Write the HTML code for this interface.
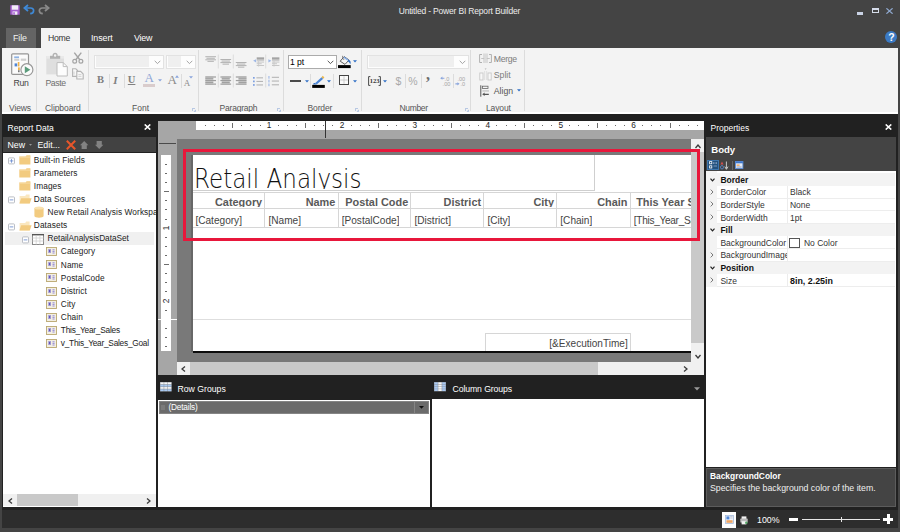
<!DOCTYPE html>
<html lang="en">
<head>
<meta charset="utf-8">
<title>Untitled - Power BI Report Builder</title>
<style>
html,body{margin:0;padding:0;}
body{width:900px;height:532px;overflow:hidden;background:#444444;font-family:"Liberation Sans",sans-serif;font-size:11px;color:#fff;position:relative;}
.a{position:absolute;}
.t{position:absolute;white-space:nowrap;line-height:14px;}
#titlebar{left:0;top:0;width:900px;height:48px;background:#444444;}
#ribbon{left:2px;top:48px;width:896px;height:65px;background:#f3f3f3;}
.sep{position:absolute;top:50px;width:1px;height:61px;background:#dcdcdc;}
.glabel{position:absolute;top:102px;color:#555;font-size:10.5px;line-height:12px;white-space:nowrap;}
.rt{position:absolute;color:#555;font-size:10.5px;line-height:12px;white-space:nowrap;}
.combo{position:absolute;height:14px;background:#e4e4e4;border:1px solid #fff;box-sizing:border-box;}
/* panels */
.phead{position:absolute;background:#2d2d2d;}
.white{position:absolute;background:#fff;}
.tree{margin-top:1.2px;position:absolute;color:#222;font-size:10.5px;line-height:13px;white-space:nowrap;}
.prop{margin-top:1.1px;position:absolute;color:#333;font-size:10.5px;line-height:13px;white-space:nowrap;}
.cell{position:absolute;color:#444;white-space:nowrap;overflow:hidden;}
.hd{position:absolute;left:0;right:0;top:3.2px;height:11.4px;overflow:hidden;font-weight:bold;font-size:10.9px;line-height:12px;color:#595959;}
.fd{position:absolute;left:3px;top:5.5px;height:11.3px;overflow:hidden;font-size:10.1px;line-height:12px;color:#444;}
</style>
</head>
<body>
<!-- ===== title bar ===== -->
<div id="titlebar" class="a"></div>
<div class="t" style="left:398.7px;top:4.2px;font-size:8.5px;letter-spacing:-0.18px;color:#ececec;">Untitled - Power BI Report Builder</div>


<!-- quick access icons -->
<svg class="a" style="left:9.5px;top:4.5px;" width="10" height="10" viewBox="0 0 10 10">
 <path d="M0.3 0.3 H9.7 V9.7 H0.3 Z" fill="#a55fd0"/>
 <rect x="1.8" y="0.3" width="6.4" height="4.4" fill="#f2ecf8"/>
 <rect x="2.6" y="6.4" width="4.8" height="3.3" fill="#f2ecf8"/>
 <rect x="3.3" y="7.2" width="1.5" height="2.5" fill="#a55fd0"/>
</svg>
<svg class="a" style="left:22.5px;top:4px;" width="13" height="11" viewBox="0 0 13 11">
 <path d="M5 1 L1.4 4 L5 7" fill="none" stroke="#3f8ad8" stroke-width="1.9"/>
 <path d="M2 4 H7.6 C11.6 4 11.8 9.2 7.2 9.6" fill="none" stroke="#3f8ad8" stroke-width="1.7"/>
</svg>
<svg class="a" style="left:36.5px;top:4px;" width="13" height="11" viewBox="0 0 13 11">
 <path d="M8 1 L11.6 4 L8 7" fill="none" stroke="#8a8a8a" stroke-width="1.9"/>
 <path d="M11 4 H5.4 C1.4 4 1.2 9.2 5.8 9.6" fill="none" stroke="#8a8a8a" stroke-width="1.7"/>
</svg>
<!-- window buttons -->
<div class="a" style="left:857px;top:12.3px;width:6px;height:2.4px;background:#c9d2e4;"></div>
<div class="a" style="left:872px;top:7.7px;width:7px;height:5.4px;border:1px solid #d5dcea;border-top-width:2px;box-sizing:border-box;"></div>
<svg class="a" style="left:886px;top:7.7px;" width="7" height="6" viewBox="0 0 7 6"><path d="M0.4 0.3 L6.6 5.7 M6.6 0.3 L0.4 5.7" stroke="#8fa9cf" stroke-width="1.2" fill="none"/></svg>
<!-- help -->
<div class="a" style="left:885.4px;top:31.3px;width:11.8px;height:11.8px;border-radius:50%;background:#3b7ac4;"></div>
<div class="t" style="left:888.3px;top:30.2px;font-size:10.5px;font-weight:bold;color:#fff;">?</div>

<!-- tabs -->
<div class="a" style="left:6px;top:28px;width:30px;height:20px;background:#646464;"></div>
<div class="t" style="left:13px;top:31px;font-size:8.9px;color:#f0f0f0;letter-spacing:-0.1px;">File</div>
<div class="a" style="left:41px;top:28px;width:39px;height:20px;background:#f3f3f3;"></div>
<div class="t" style="left:48px;top:31px;font-size:8.7px;color:#333;letter-spacing:-0.3px;">Home</div>
<div class="t" style="left:91px;top:31px;font-size:8.9px;color:#fff;letter-spacing:-0.1px;">Insert</div>
<div class="t" style="left:134px;top:31px;font-size:8.9px;color:#fff;letter-spacing:-0.2px;">View</div>

<!-- ===== ribbon ===== -->
<div id="ribbon" class="a"></div>


<!-- ribbon group separators -->
<div class="sep" style="left:36px;"></div>
<div class="sep" style="left:88px;"></div>
<div class="sep" style="left:198px;"></div>
<div class="sep" style="left:283px;"></div>
<div class="sep" style="left:361px;"></div>
<div class="sep" style="left:470px;"></div>
<div class="sep" style="left:524px;"></div>

<!-- Views group -->
<svg class="a" style="left:10px;top:52px;" width="24" height="26" viewBox="0 0 24 26">
  <rect x="1.7" y="1.8" width="16.8" height="20.6" rx="1" fill="#fbfbfb" stroke="#959595" stroke-width="1.2"/>
  <rect x="4.2" y="4.4" width="4.8" height="1.8" fill="#8db2e3"/><rect x="4.2" y="6.8" width="5" height="2" fill="#d0d0d0"/>
  <rect x="10.8" y="6.6" width="5.4" height="2.2" fill="#cfcfcf"/>
  <rect x="4.6" y="11.4" width="2.6" height="3" fill="#4f86d6"/><rect x="7.8" y="10" width="1.6" height="4.4" fill="#f1b34a"/>
  <rect x="8" y="15.4" width="1.8" height="2.6" fill="#f1b34a"/><rect x="8" y="18.2" width="1.6" height="2" fill="#777"/>
  <circle cx="16.9" cy="17.7" r="6" fill="#fbfbfb" stroke="#9a9a9a" stroke-width="1.2"/>
  <path d="M14.8 14.2 L20.4 17.7 L14.8 21.2 Z" fill="#5b9c7c"/>
</svg>
<div class="rt" style="left:13.5px;top:77px;font-size:8.7px;color:#444;letter-spacing:-0.3px;">Run</div>
<div class="glabel" style="left:9px;font-size:8.5px;letter-spacing:-0.1px;">Views</div>

<!-- Clipboard group -->
<svg class="a" style="left:45px;top:52px;" width="42" height="28" viewBox="0 0 42 28">
  <rect x="1.3" y="4" width="17.7" height="18.4" fill="#dfdfdf"/>
  <rect x="1.3" y="4" width="17.7" height="2.6" fill="#e9e9e9"/>
  <rect x="5" y="3.8" width="10.2" height="3" fill="#b2b2b2"/>
  <circle cx="10.1" cy="3.4" r="1.9" fill="#f3f3f3" stroke="#b2b2b2" stroke-width="1.3"/>
  <path d="M12 10.6 H18.2 L22.3 14.6 V24 H12 Z" fill="#fdfdfd" stroke="#bdbdbd" stroke-width="1"/>
  <path d="M18.2 10.6 V14.6 H22.3" fill="none" stroke="#bdbdbd" stroke-width="1"/>
  <g stroke="#a4a4a4" stroke-width="1.4" fill="none">
    <path d="M29.3 0.6 L35 8"/><path d="M36.3 0.6 L30.6 8"/>
    <circle cx="29.7" cy="9.3" r="1.9" stroke-width="1.2"/><circle cx="35.9" cy="9.3" r="1.9" stroke-width="1.2"/>
  </g>
  <g stroke="#b4b4b4" stroke-width="1.1" fill="#f7f7f7">
    <path d="M27.6 16.8 H30.8 L32.6 18.6 V24.4 H27.6 Z"/>
    <path d="M31.8 19.4 H35.6 L38.2 22 V27 H31.8 Z"/>
  </g>
  <path d="M33.4 22.6 H36.4 M33.4 24.4 H36.4 M29 19.6 V22.6" stroke="#c8c8c8" stroke-width="0.8" fill="none"/>
</svg>
<div class="rt" style="left:45.5px;top:77px;font-size:8.7px;color:#6e6e6e;letter-spacing:-0.42px;">Paste</div>
<div class="glabel" style="left:45px;font-size:8.5px;letter-spacing:-0.07px;">Clipboard</div>

<!-- Font group -->
<div class="a" style="left:93.5px;top:54.5px;width:70px;height:14px;background:#fdfdfd;border:1px solid #e2e2e2;box-sizing:border-box;"></div>
<div class="a" style="left:96px;top:56px;width:53px;height:11px;background:#efefef;"></div>
<svg class="a" style="left:153.5px;top:59.5px;" width="7" height="5" viewBox="0 0 7 5"><path d="M0.7 0.8 L3.5 3.6 L6.3 0.8" fill="none" stroke="#9a9a9a" stroke-width="0.9"/></svg>
<div class="a" style="left:165.5px;top:54.5px;width:30.5px;height:14px;background:#fdfdfd;border:1px solid #e2e2e2;box-sizing:border-box;"></div>
<div class="a" style="left:167.5px;top:56px;width:13.5px;height:11px;background:#efefef;"></div>
<svg class="a" style="left:185.5px;top:59.5px;" width="7" height="5" viewBox="0 0 7 5"><path d="M0.7 0.8 L3.5 3.6 L6.3 0.8" fill="none" stroke="#9a9a9a" stroke-width="0.9"/></svg>

<div class="rt" style="left:97px;top:74px;font-family:'Liberation Serif',serif;font-weight:bold;font-size:10.5px;color:#808080;">B</div>
<div class="a" style="left:108.5px;top:73.5px;width:1px;height:14px;background:#dcdcdc;"></div>
<div class="rt" style="left:113.2px;top:74px;font-family:'Liberation Serif',serif;font-style:italic;font-weight:bold;font-size:11px;color:#808080;">I</div>
<div class="a" style="left:123.5px;top:73.5px;width:1px;height:14px;background:#dcdcdc;"></div>
<div class="rt" style="left:127.8px;top:74px;font-family:'Liberation Serif',serif;font-weight:bold;font-size:10.5px;color:#808080;text-decoration:underline;">U</div>
<div class="rt" style="left:144.5px;top:71.5px;font-family:'Liberation Serif',serif;font-size:13px;color:#8fa6d6;">A</div>
<div class="a" style="left:142.5px;top:83.7px;width:12.3px;height:3px;background:#d9cccc;"></div>
<svg class="a" style="left:157.7px;top:79px;" width="4" height="3" viewBox="0 0 4 3"><path d="M0 0.3 H4 L2 2.6 Z" fill="#8aa5dc"/></svg>
<div class="rt" style="left:167.5px;top:73.5px;font-family:'Liberation Serif',serif;font-size:13px;color:#8c8c8c;">A</div>
<svg class="a" style="left:174.8px;top:74.7px;" width="4" height="3" viewBox="0 0 4 3"><path d="M0 2.7 H4 L2 0.3 Z" fill="#8aa5dc"/></svg>
<div class="a" style="left:180.5px;top:73.5px;width:1px;height:14px;background:#dcdcdc;"></div>
<div class="rt" style="left:183.7px;top:76.5px;font-family:'Liberation Serif',serif;font-size:9px;color:#8c8c8c;">A</div>
<svg class="a" style="left:189.2px;top:75.8px;" width="4" height="3" viewBox="0 0 4 3"><path d="M0 0.3 H4 L2 2.6 Z" fill="#8aa5dc"/></svg>
<div class="glabel" style="left:132px;font-size:8.5px;">Font</div>
<svg class="a launcher" style="left:192.3px;top:107.5px;" width="4" height="4" viewBox="0 0 4 4"><path d="M0.4 3 V0.4 H3" fill="none" stroke="#9fb6dc" stroke-width="0.8"/><path d="M1.6 3.8 H3.8 V1.6 Z" fill="#9fb6dc"/></svg>

<!-- Paragraph group -->
<svg class="a" style="left:204px;top:53px;" width="78" height="36" viewBox="0 0 78 36">
<rect x="1.30" y="3.20" width="10.70" height="1.0" fill="#b2b2b2"/>
<rect x="2.45" y="4.75" width="8.40" height="1.0" fill="#b2b2b2"/>
<rect x="1.30" y="6.30" width="10.70" height="1.0" fill="#b2b2b2"/>
<rect x="3.45" y="7.85" width="6.40" height="1.0" fill="#b2b2b2"/>
<rect x="16.40" y="6.00" width="10.70" height="1.0" fill="#b2b2b2"/>
<rect x="17.55" y="7.55" width="8.40" height="1.0" fill="#b2b2b2"/>
<rect x="16.40" y="9.10" width="10.70" height="1.0" fill="#b2b2b2"/>
<rect x="18.55" y="10.65" width="6.40" height="1.0" fill="#b2b2b2"/>
<rect x="31.80" y="9.00" width="10.70" height="1.0" fill="#b2b2b2"/>
<rect x="32.95" y="10.55" width="8.40" height="1.0" fill="#b2b2b2"/>
<rect x="31.80" y="12.10" width="10.70" height="1.0" fill="#b2b2b2"/>
<rect x="33.95" y="13.65" width="6.40" height="1.0" fill="#b2b2b2"/>
<rect x="13.80" y="1.5" width="1" height="14" fill="#dcdcdc"/>
<rect x="13.80" y="20.5" width="1" height="14" fill="#dcdcdc"/>
<rect x="28.80" y="1.5" width="1" height="14" fill="#dcdcdc"/>
<rect x="28.80" y="20.5" width="1" height="14" fill="#dcdcdc"/>
<rect x="61.20" y="1.5" width="1" height="14" fill="#dcdcdc"/>
<rect x="61.20" y="20.5" width="1" height="14" fill="#dcdcdc"/>
<rect x="52.70" y="4.40" width="7.40" height="1.5" fill="#9c9c9c"/>
<rect x="52.70" y="6.30" width="7.40" height="1.2" fill="#a8a8a8"/>
<rect x="52.70" y="8.60" width="7.40" height="0.9" fill="#c2c2c2"/>
<rect x="52.70" y="10.30" width="5.00" height="0.9" fill="#c2c2c2"/>
<rect x="52.70" y="12.00" width="7.40" height="0.9" fill="#c2c2c2"/>
<rect x="54.30" y="8.00" width="0.8" height="5.6" fill="#c8c8c8"/>
<path d="M52.10 6.20 L49.10 7.80 L52.10 9.40 Z" fill="#9db7e6"/>
<rect x="68.00" y="4.40" width="7.40" height="1.5" fill="#9c9c9c"/>
<rect x="68.00" y="6.30" width="7.40" height="1.2" fill="#a8a8a8"/>
<rect x="68.00" y="8.60" width="7.40" height="0.9" fill="#c2c2c2"/>
<rect x="68.00" y="10.30" width="5.00" height="0.9" fill="#c2c2c2"/>
<rect x="68.00" y="12.00" width="7.40" height="0.9" fill="#c2c2c2"/>
<rect x="69.60" y="8.00" width="0.8" height="5.6" fill="#c8c8c8"/>
<path d="M64.40 6.20 L67.40 7.80 L64.40 9.40 Z" fill="#9db7e6"/>
<rect x="1.30" y="23.40" width="8" height="8.3" fill="#d9d9d9"/>
<rect x="1.30" y="23.40" width="10.70" height="1.2" fill="#9e9e9e"/>
<rect x="1.30" y="25.18" width="8.00" height="1.2" fill="#9e9e9e"/>
<rect x="1.30" y="26.96" width="10.70" height="1.2" fill="#9e9e9e"/>
<rect x="1.30" y="28.74" width="8.00" height="1.2" fill="#9e9e9e"/>
<rect x="1.30" y="30.52" width="10.70" height="1.2" fill="#9e9e9e"/>
<rect x="17.75" y="23.40" width="8" height="8.3" fill="#d9d9d9"/>
<rect x="16.40" y="23.40" width="10.70" height="1.2" fill="#9e9e9e"/>
<rect x="17.75" y="25.18" width="8.00" height="1.2" fill="#9e9e9e"/>
<rect x="16.40" y="26.96" width="10.70" height="1.2" fill="#9e9e9e"/>
<rect x="17.75" y="28.74" width="8.00" height="1.2" fill="#9e9e9e"/>
<rect x="16.40" y="30.52" width="10.70" height="1.2" fill="#9e9e9e"/>
<rect x="34.50" y="23.40" width="8" height="8.3" fill="#d9d9d9"/>
<rect x="31.80" y="23.40" width="10.70" height="1.2" fill="#9e9e9e"/>
<rect x="34.50" y="25.18" width="8.00" height="1.2" fill="#9e9e9e"/>
<rect x="31.80" y="26.96" width="10.70" height="1.2" fill="#9e9e9e"/>
<rect x="34.50" y="28.74" width="8.00" height="1.2" fill="#9e9e9e"/>
<rect x="31.80" y="30.52" width="10.70" height="1.2" fill="#9e9e9e"/>
<rect x="49.00" y="24.00" width="1.7" height="1.7" fill="#7ea0e0"/>
<rect x="52.40" y="24.35" width="6.60" height="1.0" fill="#b0b0b0"/>
<rect x="49.00" y="27.55" width="1.7" height="1.7" fill="#7ea0e0"/>
<rect x="52.40" y="27.90" width="6.60" height="1.0" fill="#b0b0b0"/>
<rect x="49.00" y="31.10" width="1.7" height="1.7" fill="#7ea0e0"/>
<rect x="52.40" y="31.45" width="6.60" height="1.0" fill="#b0b0b0"/>
<rect x="64.40" y="23.00" width="1.1" height="2.7" fill="#9db7e6"/>
<rect x="67.80" y="23.80" width="7.20" height="1.0" fill="#b0b0b0"/>
<rect x="64.40" y="26.75" width="1.1" height="2.7" fill="#9db7e6"/>
<rect x="67.80" y="27.55" width="7.20" height="1.0" fill="#b0b0b0"/>
<rect x="64.40" y="30.50" width="1.1" height="2.7" fill="#9db7e6"/>
<rect x="67.80" y="31.30" width="7.20" height="1.0" fill="#b0b0b0"/>
</svg>
<div class="glabel" style="left:219.5px;font-size:8.5px;letter-spacing:-0.2px;">Paragraph</div>
<svg class="a" style="left:277.3px;top:107.5px;" width="4" height="4" viewBox="0 0 4 4"><path d="M0.4 3 V0.4 H3" fill="none" stroke="#9fb6dc" stroke-width="0.8"/><path d="M1.6 3.8 H3.8 V1.6 Z" fill="#9fb6dc"/></svg>
<!-- Border group -->
<div class="a" style="left:288px;top:54.5px;width:48.7px;height:14.2px;background:#fff;border:1px solid #ababab;box-sizing:border-box;"></div>
<div class="rt" style="left:290px;top:56.2px;font-size:8.6px;color:#000;letter-spacing:-0.1px;">1 pt</div>
<svg class="a" style="left:327px;top:59.5px;" width="7" height="5" viewBox="0 0 7 5"><path d="M0.7 0.8 L3.5 3.6 L6.3 0.8" fill="none" stroke="#444" stroke-width="0.9"/></svg>
<svg class="a" style="left:338px;top:55px;" width="14" height="14" viewBox="0 0 14 14">
 <path d="M2.2 6.2 L6.2 1.6 L11 5 L7 9.4 Z" fill="#f6f6f6" stroke="#4a4a4a" stroke-width="0.9"/>
 <path d="M4.6 0.8 C4.4 2.6 5 4 6.2 5" fill="none" stroke="#6a6a6a" stroke-width="0.8"/>
 <path d="M6.2 1.6 L11 5 L9.2 5.6 L5.4 2.8 Z" fill="#86aee8"/>
 <path d="M10.8 4.8 C12.6 5.4 13 7.2 12.4 9.2 C11.4 7.8 11 6.6 9.6 6.2 Z" fill="#2f6fc6"/>
 <rect x="0" y="10.1" width="12.7" height="3" fill="#000"/>
</svg>
<svg class="a" style="left:353.3px;top:60.2px;" width="4" height="3" viewBox="0 0 4 3"><path d="M0 0.3 H4 L2 2.6 Z" fill="#2f6fc6"/></svg>
<div class="a" style="left:289.7px;top:80.3px;width:11.4px;height:1.6px;background:#4a4a4a;"></div>
<svg class="a" style="left:304.5px;top:79.5px;" width="4" height="3" viewBox="0 0 4 3"><path d="M0 0.3 H4 L2 2.6 Z" fill="#2f6fc6"/></svg>
<div class="a" style="left:310px;top:74px;width:1px;height:14px;background:#dcdcdc;"></div>
<svg class="a" style="left:311.5px;top:74.5px;" width="14" height="14" viewBox="0 0 14 14">
 <path d="M3 8.2 L9.5 2.2 L11.2 3.8 L5 9.2 Z" fill="#4b86d8"/>
 <path d="M9.5 2.2 L10.8 0.8 L12.4 2.4 L11.2 3.8 Z" fill="#e9b54a"/>
 <path d="M0.8 9.2 C2 7.4 3 8 3 8.2 L5 9.2 C3.6 9.8 2 9.6 0.8 9.2 Z" fill="#2f6fc6"/>
 <rect x="0.2" y="9.9" width="12.6" height="3" fill="#000"/>
</svg>
<svg class="a" style="left:326.8px;top:79.5px;" width="4" height="3" viewBox="0 0 4 3"><path d="M0 0.3 H4 L2 2.6 Z" fill="#2f6fc6"/></svg>
<div class="a" style="left:332.5px;top:74px;width:1px;height:14px;background:#dcdcdc;"></div>
<svg class="a" style="left:339px;top:75.4px;" width="11" height="11" viewBox="0 0 11 11">
 <rect x="0.5" y="0.5" width="9" height="9" fill="#fafafa" stroke="#444" stroke-width="1"/>
 <path d="M5 1.2 V8.8 M1.2 5 H8.8" stroke="#c8c8c8" stroke-width="0.9" fill="none"/>
</svg>
<svg class="a" style="left:353.3px;top:79.5px;" width="4" height="3" viewBox="0 0 4 3"><path d="M0 0.3 H4 L2 2.6 Z" fill="#2f6fc6"/></svg>
<div class="glabel" style="left:307.5px;font-size:8.5px;letter-spacing:-0.12px;">Border</div>
<svg class="a" style="left:355.3px;top:107.5px;" width="4" height="4" viewBox="0 0 4 4"><path d="M0.4 3 V0.4 H3" fill="none" stroke="#9fb6dc" stroke-width="0.8"/><path d="M1.6 3.8 H3.8 V1.6 Z" fill="#9fb6dc"/></svg>
<!-- Number group -->
<div class="a" style="left:367px;top:54.5px;width:101.7px;height:14px;background:#fdfdfd;border:1px solid #e2e2e2;box-sizing:border-box;"></div>
<div class="a" style="left:369px;top:56px;width:85px;height:11px;background:#efefef;"></div>
<svg class="a" style="left:458.5px;top:59.5px;" width="7" height="5" viewBox="0 0 7 5"><path d="M0.7 0.8 L3.5 3.6 L6.3 0.8" fill="none" stroke="#9a9a9a" stroke-width="0.9"/></svg>
<svg class="a" style="left:368px;top:75.5px;" width="13" height="10" viewBox="0 0 13 10">
 <path d="M2.4 0.6 H0.6 V9.4 H2.4 M10.6 0.6 H12.4 V9.4 H10.6" fill="none" stroke="#4a4a4a" stroke-width="1"/>
 <text x="6.5" y="7.3" font-family="Liberation Serif,serif" font-weight="bold" font-size="6.5" fill="#333" text-anchor="middle">123</text>
</svg>
<svg class="a" style="left:383.2px;top:79.7px;" width="4" height="3" viewBox="0 0 4 3"><path d="M0 0.3 H4 L2 2.6 Z" fill="#2f6fc6"/></svg>
<div class="rt" style="left:395.5px;top:74.5px;font-size:10.5px;color:#a9a9a9;">$</div>
<div class="a" style="left:405px;top:73.5px;width:1px;height:14px;background:#dcdcdc;"></div>
<div class="rt" style="left:408.3px;top:74.5px;font-size:10.5px;color:#a9a9a9;">%</div>
<div class="a" style="left:420.5px;top:73.5px;width:1px;height:14px;background:#dcdcdc;"></div>
<div class="rt" style="left:426px;top:68.6px;font-family:'Liberation Serif',serif;font-weight:bold;font-size:16px;color:#6c6c6c;">,</div>
<svg class="a" style="left:439.5px;top:75.5px;" width="13" height="11" viewBox="0 0 13 11">
 <path d="M0.2 2.2 L2.4 0.6 V1.7 H4.4 V2.8 H2.4 V3.8 Z" fill="#8aa5dc"/>
 <text x="4.6" y="4.8" font-family="Liberation Sans,sans-serif" font-size="5.6" fill="#a6a6a6">.0</text>
 <text x="2.6" y="10.2" font-family="Liberation Sans,sans-serif" font-size="5.6" fill="#a6a6a6">.00</text>
</svg>
<div class="a" style="left:453px;top:73.5px;width:1px;height:14px;background:#dcdcdc;"></div>
<svg class="a" style="left:455px;top:75.5px;" width="13" height="11" viewBox="0 0 13 11">
 <text x="2.4" y="4.8" font-family="Liberation Sans,sans-serif" font-size="5.6" fill="#a6a6a6">.00</text>
 <path d="M4.6 7.8 L2.4 6.2 V7.3 H0.4 V8.4 H2.4 V9.4 Z" fill="#8aa5dc"/>
 <text x="5.4" y="10.2" font-family="Liberation Sans,sans-serif" font-size="5.6" fill="#a6a6a6">.0</text>
</svg>
<div class="glabel" style="left:399.5px;font-size:8.5px;letter-spacing:-0.33px;">Number</div>
<svg class="a" style="left:465.3px;top:107.5px;" width="4" height="4" viewBox="0 0 4 4"><path d="M0.4 3 V0.4 H3" fill="none" stroke="#9fb6dc" stroke-width="0.8"/><path d="M1.6 3.8 H3.8 V1.6 Z" fill="#9fb6dc"/></svg>
<!-- Layout group -->
<svg class="a" style="left:478.5px;top:53px;" width="13" height="11" viewBox="0 0 13 11">
 <rect x="4" y="0.5" width="5" height="9.5" fill="#dcdcdc"/>
 <path d="M3 1.5 H0.6 V9.5 H3 M10 1.5 H12.4 V9.5 H10" fill="none" stroke="#b0b0b0" stroke-width="1"/>
 <path d="M2.2 5.5 H5.2 M7.8 5.5 H10.8" stroke="#c4c4c4" stroke-width="1"/>
</svg>
<div class="rt" style="left:493.8px;top:52.7px;font-size:8.7px;color:#7c7c7c;letter-spacing:-0.34px;">Merge</div>
<svg class="a" style="left:478.5px;top:67.5px;" width="13" height="13" viewBox="0 0 13 13">
 <path d="M5.6 0.6 H7.6 L6.6 1.8 Z" fill="#b0b0b0"/>
 <rect x="0.8" y="5" width="3.2" height="7" fill="#f8f8f8" stroke="#c9c9c9" stroke-width="0.9"/>
 <rect x="9" y="5" width="3.2" height="7" fill="#f8f8f8" stroke="#c9c9c9" stroke-width="0.9"/>
 <path d="M5.6 3 V12 M7.6 3 V12" stroke="#dadada" stroke-width="0.8"/>
</svg>
<div class="rt" style="left:493.8px;top:69px;font-size:8.7px;color:#7c7c7c;">Split</div>
<svg class="a" style="left:480px;top:84.5px;" width="10" height="12" viewBox="0 0 10 12">
 <path d="M0.8 0.3 V11.7" stroke="#555" stroke-width="1"/>
 <rect x="2.4" y="1.2" width="5.6" height="2.2" fill="none" stroke="#666" stroke-width="0.8"/>
 <rect x="2.4" y="5" width="6.6" height="1.8" fill="#d0d0d0"/>
 <path d="M2.2 9.3 L4.6 7.6 V8.8 H8.8 V9.9 H4.6 V11 Z" fill="#555"/>
</svg>
<div class="rt" style="left:493.8px;top:85px;font-size:8.7px;color:#555;">Align</div>
<svg class="a" style="left:516.6px;top:89px;" width="4" height="3" viewBox="0 0 4 3"><path d="M0 0.3 H4 L2 2.6 Z" fill="#2f6fc6"/></svg>
<div class="glabel" style="left:486px;font-size:8.5px;letter-spacing:-0.12px;">Layout</div>
<!-- ===== dark band ===== -->
<div class="a" style="left:2px;top:112px;width:896px;height:1.5px;background:#fff;"></div>
<div class="a" style="left:2px;top:113.5px;width:896px;height:396.5px;background:#212121;"></div>

<!-- ===== left panel ===== -->


<div class="t" style="left:7.5px;top:120.5px;font-size:8.6px;color:#fff;">Report Data</div>
<svg class="a" style="left:144.3px;top:124px;" width="7" height="6" viewBox="0 0 7 6"><path d="M0.7 0.4 L6.3 5.6 M6.3 0.4 L0.7 5.6" stroke="#fff" stroke-width="1.5" fill="none"/></svg>
<div class="a" style="left:3px;top:137px;width:153px;height:15px;background:#424242;"></div>
<div class="t" style="left:7.5px;top:138.3px;font-size:8.8px;color:#fff;">New</div>
<svg class="a" style="left:29.3px;top:144.3px;" width="3" height="2" viewBox="0 0 3 2"><path d="M0 0 H3 L1.5 1.8 Z" fill="#9a9a9a"/></svg>
<div class="t" style="left:37.5px;top:138.3px;font-size:8.8px;color:#fff;">Edit...</div>
<svg class="a" style="left:65.5px;top:140px;" width="10" height="10" viewBox="0 0 10 10"><path d="M0.8 0.8 L9.2 9.2 M9.2 0.8 L0.8 9.2" stroke="#e8562a" stroke-width="2" fill="none"/></svg>
<svg class="a" style="left:80.3px;top:141px;" width="9" height="8" viewBox="0 0 9 8"><path d="M4.2 0 L8.4 4.2 H6.8 V8 H1.6 V4.2 H0 Z" fill="#828282"/></svg>
<svg class="a" style="left:94.6px;top:141.2px;" width="9" height="8" viewBox="0 0 9 8"><path d="M4.2 8 L8.4 3.8 H6.8 V0 H1.6 V3.8 H0 Z" fill="#828282"/></svg>
<div class="a" style="left:3px;top:152.5px;width:152.7px;height:354px;background:#fff;overflow:hidden;" id="tree">
<div class="a" style="left:2.3px;top:79.8px;width:148.5px;height:12.8px;background:#f0f0f0;"></div>
<svg class="a" style="left:5.0px;top:4.5px;" width="7" height="8" viewBox="0 0 7 8"><rect x="0.5" y="0.9" width="6" height="6" rx="0.8" fill="#fff" stroke="#b4b8c0" stroke-width="0.9"/><path d="M1.7 3.9 H5.3" stroke="#6f8fd0" stroke-width="0.9"/><path d="M3.5 2.1 V5.7" stroke="#6f8fd0" stroke-width="0.9"/></svg>
<svg class="a" style="left:15.7px;top:2.5px;" width="12" height="10" viewBox="0 0 12 10"><path d="M0.3 1.6 H6.6 L7.6 0.3 H11.4 V9.6 H0.3 Z" fill="#f2cb80"/><path d="M0.3 1.6 H11.4 V2.6 H0.3 Z" fill="#f7dca6"/></svg>
<div class="tree" style="left:30.8px;top:0.0px;font-size:8.3px;letter-spacing:0.09px;">Built-in Fields</div>
<svg class="a" style="left:15.7px;top:15.6px;" width="12" height="10" viewBox="0 0 12 10"><path d="M0.3 1.6 H6.6 L7.6 0.3 H11.4 V9.6 H0.3 Z" fill="#f2cb80"/><path d="M0.3 1.6 H11.4 V2.6 H0.3 Z" fill="#f7dca6"/></svg>
<div class="tree" style="left:30.8px;top:13.1px;font-size:8.3px;letter-spacing:0.09px;">Parameters</div>
<svg class="a" style="left:15.7px;top:28.7px;" width="12" height="10" viewBox="0 0 12 10"><path d="M0.3 1.6 H6.6 L7.6 0.3 H11.4 V9.6 H0.3 Z" fill="#f2cb80"/><path d="M0.3 1.6 H11.4 V2.6 H0.3 Z" fill="#f7dca6"/></svg>
<div class="tree" style="left:30.8px;top:26.2px;font-size:8.3px;letter-spacing:0.09px;">Images</div>
<svg class="a" style="left:5.0px;top:43.9px;" width="7" height="8" viewBox="0 0 7 8"><rect x="0.5" y="0.9" width="6" height="6" rx="0.8" fill="#fff" stroke="#b4b8c0" stroke-width="0.9"/><path d="M1.7 3.9 H5.3" stroke="#6f8fd0" stroke-width="0.9"/></svg>
<svg class="a" style="left:15.7px;top:41.9px;" width="13" height="10" viewBox="0 0 13 10"><path d="M0.6 2 H6.2 L7.2 0.5 H10.6 V9.4 H0.6 Z" fill="#fae7bf"/><path d="M2.2 4.2 H12.6 L10.8 9.6 H0.4 Z" fill="#f2cb80"/></svg>
<div class="tree" style="left:30.8px;top:39.4px;font-size:8.3px;letter-spacing:0.09px;">Data Sources</div>
<svg class="a" style="left:30.8px;top:53.8px;" width="10" height="12" viewBox="0 0 10 12"><path d="M0.4 2 V10 C0.4 12.2 9.6 12.2 9.6 10 V2 Z" fill="#f2cb80"/><ellipse cx="5" cy="2" rx="4.6" ry="1.6" fill="#f9e2b0"/></svg>
<div class="tree" style="left:44.6px;top:52.5px;font-size:8.3px;letter-spacing:0.09px;">New Retail Analysis Workspace</div>
<svg class="a" style="left:5.0px;top:70.1px;" width="7" height="8" viewBox="0 0 7 8"><rect x="0.5" y="0.9" width="6" height="6" rx="0.8" fill="#fff" stroke="#b4b8c0" stroke-width="0.9"/><path d="M1.7 3.9 H5.3" stroke="#6f8fd0" stroke-width="0.9"/></svg>
<svg class="a" style="left:15.7px;top:68.1px;" width="13" height="10" viewBox="0 0 13 10"><path d="M0.6 2 H6.2 L7.2 0.5 H10.6 V9.4 H0.6 Z" fill="#fae7bf"/><path d="M2.2 4.2 H12.6 L10.8 9.6 H0.4 Z" fill="#f2cb80"/></svg>
<div class="tree" style="left:30.8px;top:65.6px;font-size:8.3px;letter-spacing:0.09px;">Datasets</div>
<svg class="a" style="left:18.7px;top:83.2px;" width="7" height="8" viewBox="0 0 7 8"><rect x="0.5" y="0.9" width="6" height="6" rx="0.8" fill="#fff" stroke="#b4b8c0" stroke-width="0.9"/><path d="M1.7 3.9 H5.3" stroke="#6f8fd0" stroke-width="0.9"/></svg>
<svg class="a" style="left:29.4px;top:81.1px;" width="12" height="11" viewBox="0 0 12 11"><rect x="0.5" y="0.5" width="11" height="10" fill="#fff" stroke="#8a8a8a" stroke-width="1"/><rect x="0" y="0" width="12" height="1.4" fill="#555"/><path d="M4.2 1.6 V10.5 M7.9 1.6 V10.5 M0.5 4 H11.5 M0.5 7 H11.5" stroke="#d0d0d0" stroke-width="0.8"/></svg>
<div class="tree" style="left:44.6px;top:78.7px;font-size:8.3px;letter-spacing:-0.04px;">RetailAnalysisDataSet</div>
<svg class="a" style="left:43.2px;top:94.7px;" width="11" height="9" viewBox="0 0 11 9"><rect x="0.5" y="0.5" width="10" height="8" fill="#f3efe2" stroke="#b9a66f" stroke-width="0.9"/><path d="M2.2 3 H5 M2.2 5 H5 M3.6 3 V5" stroke="#5a4fc0" stroke-width="1" fill="none"/><path d="M6.5 2.8 H8.6 M6.5 4.4 H8.6 M6.5 6 H8.6" stroke="#7d74d4" stroke-width="0.8"/></svg>
<div class="tree" style="left:57.8px;top:91.8px;font-size:8.3px;letter-spacing:0.09px;">Category</div>
<svg class="a" style="left:43.2px;top:107.8px;" width="11" height="9" viewBox="0 0 11 9"><rect x="0.5" y="0.5" width="10" height="8" fill="#f3efe2" stroke="#b9a66f" stroke-width="0.9"/><path d="M2.2 3 H5 M2.2 5 H5 M3.6 3 V5" stroke="#5a4fc0" stroke-width="1" fill="none"/><path d="M6.5 2.8 H8.6 M6.5 4.4 H8.6 M6.5 6 H8.6" stroke="#7d74d4" stroke-width="0.8"/></svg>
<div class="tree" style="left:57.8px;top:105.0px;font-size:8.3px;letter-spacing:0.09px;">Name</div>
<svg class="a" style="left:43.2px;top:120.9px;" width="11" height="9" viewBox="0 0 11 9"><rect x="0.5" y="0.5" width="10" height="8" fill="#f3efe2" stroke="#b9a66f" stroke-width="0.9"/><path d="M2.2 3 H5 M2.2 5 H5 M3.6 3 V5" stroke="#5a4fc0" stroke-width="1" fill="none"/><path d="M6.5 2.8 H8.6 M6.5 4.4 H8.6 M6.5 6 H8.6" stroke="#7d74d4" stroke-width="0.8"/></svg>
<div class="tree" style="left:57.8px;top:118.1px;font-size:8.3px;letter-spacing:0.09px;">PostalCode</div>
<svg class="a" style="left:43.2px;top:134.1px;" width="11" height="9" viewBox="0 0 11 9"><rect x="0.5" y="0.5" width="10" height="8" fill="#f3efe2" stroke="#b9a66f" stroke-width="0.9"/><path d="M2.2 3 H5 M2.2 5 H5 M3.6 3 V5" stroke="#5a4fc0" stroke-width="1" fill="none"/><path d="M6.5 2.8 H8.6 M6.5 4.4 H8.6 M6.5 6 H8.6" stroke="#7d74d4" stroke-width="0.8"/></svg>
<div class="tree" style="left:57.8px;top:131.2px;font-size:8.3px;letter-spacing:0.09px;">District</div>
<svg class="a" style="left:43.2px;top:147.2px;" width="11" height="9" viewBox="0 0 11 9"><rect x="0.5" y="0.5" width="10" height="8" fill="#f3efe2" stroke="#b9a66f" stroke-width="0.9"/><path d="M2.2 3 H5 M2.2 5 H5 M3.6 3 V5" stroke="#5a4fc0" stroke-width="1" fill="none"/><path d="M6.5 2.8 H8.6 M6.5 4.4 H8.6 M6.5 6 H8.6" stroke="#7d74d4" stroke-width="0.8"/></svg>
<div class="tree" style="left:57.8px;top:144.3px;font-size:8.3px;letter-spacing:0.09px;">City</div>
<svg class="a" style="left:43.2px;top:160.3px;" width="11" height="9" viewBox="0 0 11 9"><rect x="0.5" y="0.5" width="10" height="8" fill="#f3efe2" stroke="#b9a66f" stroke-width="0.9"/><path d="M2.2 3 H5 M2.2 5 H5 M3.6 3 V5" stroke="#5a4fc0" stroke-width="1" fill="none"/><path d="M6.5 2.8 H8.6 M6.5 4.4 H8.6 M6.5 6 H8.6" stroke="#7d74d4" stroke-width="0.8"/></svg>
<div class="tree" style="left:57.8px;top:157.4px;font-size:8.3px;letter-spacing:0.09px;">Chain</div>
<svg class="a" style="left:43.2px;top:173.4px;" width="11" height="9" viewBox="0 0 11 9"><rect x="0.5" y="0.5" width="10" height="8" fill="#f3efe2" stroke="#b9a66f" stroke-width="0.9"/><path d="M2.2 3 H5 M2.2 5 H5 M3.6 3 V5" stroke="#5a4fc0" stroke-width="1" fill="none"/><path d="M6.5 2.8 H8.6 M6.5 4.4 H8.6 M6.5 6 H8.6" stroke="#7d74d4" stroke-width="0.8"/></svg>
<div class="tree" style="left:57.8px;top:170.6px;font-size:8.3px;letter-spacing:-0.22px;">This_Year_Sales</div>
<svg class="a" style="left:43.2px;top:186.5px;" width="11" height="9" viewBox="0 0 11 9"><rect x="0.5" y="0.5" width="10" height="8" fill="#f3efe2" stroke="#b9a66f" stroke-width="0.9"/><path d="M2.2 3 H5 M2.2 5 H5 M3.6 3 V5" stroke="#5a4fc0" stroke-width="1" fill="none"/><path d="M6.5 2.8 H8.6 M6.5 4.4 H8.6 M6.5 6 H8.6" stroke="#7d74d4" stroke-width="0.8"/></svg>
<div class="tree" style="left:57.8px;top:183.7px;font-size:8.3px;letter-spacing:-0.24px;">v_This_Year_Sales_Goal</div>
<div class="a" style="left:0;top:341.7px;width:152.7px;height:12.3px;background:#f0f0f0;"></div>
<div class="a" style="left:13.7px;top:341.7px;width:61px;height:12.3px;background:#c9c9c9;"></div>
<svg class="a" style="left:4.8px;top:345px;" width="5" height="6" viewBox="0 0 5 6"><path d="M4 0.5 L1 3 L4 5.5" fill="none" stroke="#3a3a3a" stroke-width="1.3"/></svg>
<svg class="a" style="left:143.3px;top:345px;" width="5" height="6" viewBox="0 0 5 6"><path d="M1 0.5 L4 3 L1 5.5" fill="none" stroke="#3a3a3a" stroke-width="1.3"/></svg>
</div>
<!-- ===== design surface ===== -->
<div id="design" class="a" style="left:158px;top:121px;width:546px;height:254px;background:#a6a6a6;overflow:hidden;">
<div class="a" style="left:38px;top:0px;width:508px;height:9px;background:#fff;"></div>
<div class="a" style="left:46.8px;top:3.7px;width:1px;height:1.4px;background:#6a6a6a;"></div>
<div class="a" style="left:55.9px;top:3.7px;width:1px;height:1.4px;background:#6a6a6a;"></div>
<div class="a" style="left:65.0px;top:3.7px;width:1px;height:1.4px;background:#6a6a6a;"></div>
<div class="a" style="left:74.1px;top:1.8px;width:1px;height:5px;background:#6e6e6e;"></div>
<div class="a" style="left:83.3px;top:3.7px;width:1px;height:1.4px;background:#6a6a6a;"></div>
<div class="a" style="left:92.4px;top:3.7px;width:1px;height:1.4px;background:#6a6a6a;"></div>
<div class="a" style="left:101.5px;top:3.7px;width:1px;height:1.4px;background:#6a6a6a;"></div>
<div class="t" style="left:108.1px;top:-2.6px;width:6px;text-align:center;font-size:8.3px;color:#222;line-height:14px;">1</div>
<div class="a" style="left:119.7px;top:3.7px;width:1px;height:1.4px;background:#6a6a6a;"></div>
<div class="a" style="left:128.8px;top:3.7px;width:1px;height:1.4px;background:#6a6a6a;"></div>
<div class="a" style="left:137.9px;top:3.7px;width:1px;height:1.4px;background:#6a6a6a;"></div>
<div class="a" style="left:147.1px;top:1.8px;width:1px;height:5px;background:#6e6e6e;"></div>
<div class="a" style="left:156.2px;top:3.7px;width:1px;height:1.4px;background:#6a6a6a;"></div>
<div class="a" style="left:165.3px;top:3.7px;width:1px;height:1.4px;background:#6a6a6a;"></div>
<div class="a" style="left:174.4px;top:3.7px;width:1px;height:1.4px;background:#6a6a6a;"></div>
<div class="t" style="left:181.0px;top:-2.6px;width:6px;text-align:center;font-size:8.3px;color:#222;line-height:14px;">2</div>
<div class="a" style="left:192.6px;top:3.7px;width:1px;height:1.4px;background:#6a6a6a;"></div>
<div class="a" style="left:201.7px;top:3.7px;width:1px;height:1.4px;background:#6a6a6a;"></div>
<div class="a" style="left:210.8px;top:3.7px;width:1px;height:1.4px;background:#6a6a6a;"></div>
<div class="a" style="left:219.9px;top:1.8px;width:1px;height:5px;background:#6e6e6e;"></div>
<div class="a" style="left:229.1px;top:3.7px;width:1px;height:1.4px;background:#6a6a6a;"></div>
<div class="a" style="left:238.2px;top:3.7px;width:1px;height:1.4px;background:#6a6a6a;"></div>
<div class="a" style="left:247.3px;top:3.7px;width:1px;height:1.4px;background:#6a6a6a;"></div>
<div class="t" style="left:253.9px;top:-2.6px;width:6px;text-align:center;font-size:8.3px;color:#222;line-height:14px;">3</div>
<div class="a" style="left:265.5px;top:3.7px;width:1px;height:1.4px;background:#6a6a6a;"></div>
<div class="a" style="left:274.6px;top:3.7px;width:1px;height:1.4px;background:#6a6a6a;"></div>
<div class="a" style="left:283.7px;top:3.7px;width:1px;height:1.4px;background:#6a6a6a;"></div>
<div class="a" style="left:292.9px;top:1.8px;width:1px;height:5px;background:#6e6e6e;"></div>
<div class="a" style="left:302.0px;top:3.7px;width:1px;height:1.4px;background:#6a6a6a;"></div>
<div class="a" style="left:311.1px;top:3.7px;width:1px;height:1.4px;background:#6a6a6a;"></div>
<div class="a" style="left:320.2px;top:3.7px;width:1px;height:1.4px;background:#6a6a6a;"></div>
<div class="t" style="left:326.8px;top:-2.6px;width:6px;text-align:center;font-size:8.3px;color:#222;line-height:14px;">4</div>
<div class="a" style="left:338.4px;top:3.7px;width:1px;height:1.4px;background:#6a6a6a;"></div>
<div class="a" style="left:347.5px;top:3.7px;width:1px;height:1.4px;background:#6a6a6a;"></div>
<div class="a" style="left:356.6px;top:3.7px;width:1px;height:1.4px;background:#6a6a6a;"></div>
<div class="a" style="left:365.8px;top:1.8px;width:1px;height:5px;background:#6e6e6e;"></div>
<div class="a" style="left:374.9px;top:3.7px;width:1px;height:1.4px;background:#6a6a6a;"></div>
<div class="a" style="left:384.0px;top:3.7px;width:1px;height:1.4px;background:#6a6a6a;"></div>
<div class="a" style="left:393.1px;top:3.7px;width:1px;height:1.4px;background:#6a6a6a;"></div>
<div class="t" style="left:399.7px;top:-2.6px;width:6px;text-align:center;font-size:8.3px;color:#222;line-height:14px;">5</div>
<div class="a" style="left:411.3px;top:3.7px;width:1px;height:1.4px;background:#6a6a6a;"></div>
<div class="a" style="left:420.4px;top:3.7px;width:1px;height:1.4px;background:#6a6a6a;"></div>
<div class="a" style="left:429.5px;top:3.7px;width:1px;height:1.4px;background:#6a6a6a;"></div>
<div class="a" style="left:438.7px;top:1.8px;width:1px;height:5px;background:#6e6e6e;"></div>
<div class="a" style="left:447.8px;top:3.7px;width:1px;height:1.4px;background:#6a6a6a;"></div>
<div class="a" style="left:456.9px;top:3.7px;width:1px;height:1.4px;background:#6a6a6a;"></div>
<div class="a" style="left:466.0px;top:3.7px;width:1px;height:1.4px;background:#6a6a6a;"></div>
<div class="t" style="left:472.6px;top:-2.6px;width:6px;text-align:center;font-size:8.3px;color:#222;line-height:14px;">6</div>
<div class="a" style="left:484.2px;top:3.7px;width:1px;height:1.4px;background:#6a6a6a;"></div>
<div class="a" style="left:493.3px;top:3.7px;width:1px;height:1.4px;background:#6a6a6a;"></div>
<div class="a" style="left:502.4px;top:3.7px;width:1px;height:1.4px;background:#6a6a6a;"></div>
<div class="a" style="left:511.5px;top:1.8px;width:1px;height:5px;background:#6e6e6e;"></div>
<div class="a" style="left:520.7px;top:3.7px;width:1px;height:1.4px;background:#6a6a6a;"></div>
<div class="a" style="left:529.8px;top:3.7px;width:1px;height:1.4px;background:#6a6a6a;"></div>
<div class="a" style="left:538.9px;top:3.7px;width:1px;height:1.4px;background:#6a6a6a;"></div>
<div class="a" style="left:167px;top:0;width:1px;height:17px;background:#333;"></div>
<div class="a" style="left:18.7px;top:17.7px;width:527.3px;height:236.3px;background:#797979;"></div>
<div class="a" style="left:1.2px;top:22px;width:16.6px;height:1px;background:#4a4a4a;"></div>
<div class="a" style="left:2.7px;top:33.7px;width:10.8px;height:196.3px;background:#fff;"></div>
<div class="a" style="left:7.4px;top:42.8px;width:1.4px;height:1px;background:#6a6a6a;"></div>
<div class="a" style="left:7.4px;top:51.9px;width:1.4px;height:1px;background:#6a6a6a;"></div>
<div class="a" style="left:7.4px;top:61.0px;width:1.4px;height:1px;background:#6a6a6a;"></div>
<div class="a" style="left:5.6px;top:70.1px;width:5px;height:1px;background:#6e6e6e;"></div>
<div class="a" style="left:7.4px;top:79.3px;width:1.4px;height:1px;background:#6a6a6a;"></div>
<div class="a" style="left:7.4px;top:88.4px;width:1.4px;height:1px;background:#6a6a6a;"></div>
<div class="a" style="left:7.4px;top:97.5px;width:1.4px;height:1px;background:#6a6a6a;"></div>
<div class="t" style="left:2.7px;top:100.1px;width:10.8px;height:14px;text-align:center;font-size:8.3px;color:#222;line-height:14px;transform:rotate(-90deg);">1</div>
<div class="a" style="left:7.4px;top:115.7px;width:1.4px;height:1px;background:#6a6a6a;"></div>
<div class="a" style="left:7.4px;top:124.8px;width:1.4px;height:1px;background:#6a6a6a;"></div>
<div class="a" style="left:7.4px;top:133.9px;width:1.4px;height:1px;background:#6a6a6a;"></div>
<div class="a" style="left:5.6px;top:143.1px;width:5px;height:1px;background:#6e6e6e;"></div>
<div class="a" style="left:7.4px;top:152.2px;width:1.4px;height:1px;background:#6a6a6a;"></div>
<div class="a" style="left:7.4px;top:161.3px;width:1.4px;height:1px;background:#6a6a6a;"></div>
<div class="a" style="left:7.4px;top:170.4px;width:1.4px;height:1px;background:#6a6a6a;"></div>
<div class="t" style="left:2.7px;top:173.0px;width:10.8px;height:14px;text-align:center;font-size:8.3px;color:#222;line-height:14px;transform:rotate(-90deg);">2</div>
<div class="a" style="left:7.4px;top:188.6px;width:1.4px;height:1px;background:#6a6a6a;"></div>
<div class="a" style="left:0px;top:197.5px;width:18.5px;height:1.3px;background:#fff;"></div>
<div class="a" style="left:7.4px;top:206.8px;width:1.4px;height:1px;background:#6a6a6a;"></div>
<div class="a" style="left:7.4px;top:215.9px;width:1.4px;height:1px;background:#6a6a6a;"></div>
<div class="a" style="left:7.4px;top:225.0px;width:1.4px;height:1px;background:#6a6a6a;"></div>
<div id="page" class="a" style="left:34.4px;top:33.7px;width:498.6px;height:196.3px;background:#fff;overflow:hidden;">
<div class="a" style="left:0;top:0;width:402.3px;height:36.3px;border-right:1px solid #cfcfcf;border-bottom:1px solid #cfcfcf;box-sizing:border-box;overflow:hidden;"><div id="rtitle" class="a" style="left:1.2px;top:9.4px;font-family:'DejaVu Sans Light','DejaVu Sans','Liberation Sans',sans-serif;font-weight:200;font-size:26px;line-height:30px;transform:scaleX(0.887);transform-origin:0 0;color:#111;white-space:nowrap;height:24.6px;overflow:hidden;">Retail Analysis</div></div>
<div class="cell" style="left:0.0px;top:37.2px;width:73.1px;height:17.2px;border-right:1px solid #d6d6d6;border-bottom:1px solid #d6d6d6;border-top:1px solid #d6d6d6;box-sizing:border-box;"><div class="hd" style="text-align:right;padding-right:2.3px;">Category</div></div>
<div class="cell" style="left:0.0px;top:54.4px;width:73.1px;height:19.3px;border-right:1px solid #d6d6d6;border-bottom:1px solid #d6d6d6;box-sizing:border-box;"><div class="fd">[Category]</div></div>
<div class="cell" style="left:73.1px;top:37.2px;width:73.2px;height:17.2px;border-right:1px solid #d6d6d6;border-bottom:1px solid #d6d6d6;border-top:1px solid #d6d6d6;box-sizing:border-box;"><div class="hd" style="text-align:right;padding-right:2.3px;">Name</div></div>
<div class="cell" style="left:73.1px;top:54.4px;width:73.2px;height:19.3px;border-right:1px solid #d6d6d6;border-bottom:1px solid #d6d6d6;box-sizing:border-box;"><div class="fd">[Name]</div></div>
<div class="cell" style="left:146.3px;top:37.2px;width:72.8px;height:17.2px;border-right:1px solid #d6d6d6;border-bottom:1px solid #d6d6d6;border-top:1px solid #d6d6d6;box-sizing:border-box;"><div class="hd" style="text-align:right;padding-right:2.3px;">Postal Code</div></div>
<div class="cell" style="left:146.3px;top:54.4px;width:72.8px;height:19.3px;border-right:1px solid #d6d6d6;border-bottom:1px solid #d6d6d6;box-sizing:border-box;"><div class="fd">[PostalCode]</div></div>
<div class="cell" style="left:219.1px;top:37.2px;width:72.9px;height:17.2px;border-right:1px solid #d6d6d6;border-bottom:1px solid #d6d6d6;border-top:1px solid #d6d6d6;box-sizing:border-box;"><div class="hd" style="text-align:right;padding-right:2.3px;">District</div></div>
<div class="cell" style="left:219.1px;top:54.4px;width:72.9px;height:19.3px;border-right:1px solid #d6d6d6;border-bottom:1px solid #d6d6d6;box-sizing:border-box;"><div class="fd">[District]</div></div>
<div class="cell" style="left:292.0px;top:37.2px;width:72.9px;height:17.2px;border-right:1px solid #d6d6d6;border-bottom:1px solid #d6d6d6;border-top:1px solid #d6d6d6;box-sizing:border-box;"><div class="hd" style="text-align:right;padding-right:2.3px;">City</div></div>
<div class="cell" style="left:292.0px;top:54.4px;width:72.9px;height:19.3px;border-right:1px solid #d6d6d6;border-bottom:1px solid #d6d6d6;box-sizing:border-box;"><div class="fd">[City]</div></div>
<div class="cell" style="left:364.9px;top:37.2px;width:73.5px;height:17.2px;border-right:1px solid #d6d6d6;border-bottom:1px solid #d6d6d6;border-top:1px solid #d6d6d6;box-sizing:border-box;"><div class="hd" style="text-align:right;padding-right:2.3px;">Chain</div></div>
<div class="cell" style="left:364.9px;top:54.4px;width:73.5px;height:19.3px;border-right:1px solid #d6d6d6;border-bottom:1px solid #d6d6d6;box-sizing:border-box;"><div class="fd">[Chain]</div></div>
<div class="cell" style="left:438.4px;top:37.2px;width:72.9px;height:17.2px;border-right:1px solid #d6d6d6;border-bottom:1px solid #d6d6d6;border-top:1px solid #d6d6d6;box-sizing:border-box;"><div class="hd" style="text-align:left;padding-left:5.4px;">This Year Sales</div></div>
<div class="cell" style="left:438.4px;top:54.4px;width:72.9px;height:19.3px;border-right:1px solid #d6d6d6;border-bottom:1px solid #d6d6d6;box-sizing:border-box;"><div class="fd" style="letter-spacing:-0.3px;">[This_Year_Sales]</div></div>
<div class="a" style="left:0;top:164.0px;width:498.6px;height:1px;background:#dedede;"></div>
<div class="a" style="left:292.3px;top:178.6px;width:146.6px;height:30px;border:1px solid #d6d6d6;box-sizing:border-box;"><div class="a" style="right:2.6px;top:3.8px;font-size:10.05px;line-height:12px;color:#444;white-space:nowrap;">[&amp;ExecutionTime]</div></div>
</div>
<div class="a" style="left:32.6px;top:33.7px;width:2px;height:197.6px;background:#676767;"></div>
<div class="a" style="left:35px;top:229.7px;width:498px;height:2.1px;background:#0c0c0c;"></div>
<div class="a" style="left:533px;top:17.7px;width:13px;height:236.3px;background:#f0f0f0;"></div>
<div class="a" style="left:533px;top:31px;width:13px;height:190.5px;background:#c9c9c9;"></div>
<svg class="a" style="left:536.5px;top:22.5px;" width="6" height="5" viewBox="0 0 6 5"><path d="M0.5 4 L3 1 L5.5 4" fill="none" stroke="#3a3a3a" stroke-width="1.3"/></svg>
<svg class="a" style="left:536.5px;top:232.5px;" width="6" height="5" viewBox="0 0 6 5"><path d="M0.5 1 L3 4 L5.5 1" fill="none" stroke="#3a3a3a" stroke-width="1.3"/></svg>
<div class="a" style="left:18.7px;top:241px;width:514.3px;height:13px;background:#f0f0f0;"></div>
<div class="a" style="left:31.5px;top:241px;width:408.0px;height:13px;background:#c9c9c9;"></div>
<svg class="a" style="left:22.8px;top:244.5px;" width="5" height="6" viewBox="0 0 5 6"><path d="M4 0.5 L1 3 L4 5.5" fill="none" stroke="#3a3a3a" stroke-width="1.3"/></svg>
<svg class="a" style="left:524.5px;top:244.5px;" width="5" height="6" viewBox="0 0 5 6"><path d="M1 0.5 L4 3 L1 5.5" fill="none" stroke="#3a3a3a" stroke-width="1.3"/></svg>
<div class="a" style="left:25px;top:28.3px;width:517px;height:91.7px;border:3px solid #e8173b;box-sizing:border-box;"></div>
</div>

<!-- ===== groups ===== -->


<svg class="a" style="left:159.7px;top:381.8px;" width="12" height="10" viewBox="0 0 12 10"><rect x="0" y="0" width="11.7" height="9.5" fill="#8a8f96"/><rect x="0.40" y="0.40" width="3.3" height="1.85" fill="#f8f8f8"/><rect x="4.20" y="0.40" width="3.3" height="1.85" fill="#f8f8f8"/><rect x="8.00" y="0.40" width="3.3" height="1.85" fill="#f8f8f8"/><rect x="0.40" y="2.70" width="3.3" height="1.85" fill="#a9c9f2"/><rect x="4.20" y="2.70" width="3.3" height="1.85" fill="#a9c9f2"/><rect x="8.00" y="2.70" width="3.3" height="1.85" fill="#a9c9f2"/><rect x="0.40" y="5.00" width="3.3" height="1.85" fill="#eeeeee"/><rect x="4.20" y="5.00" width="3.3" height="1.85" fill="#eeeeee"/><rect x="8.00" y="5.00" width="3.3" height="1.85" fill="#eeeeee"/><rect x="0.40" y="7.30" width="3.3" height="1.85" fill="#a9c9f2"/><rect x="4.20" y="7.30" width="3.3" height="1.85" fill="#a9c9f2"/><rect x="8.00" y="7.30" width="3.3" height="1.85" fill="#a9c9f2"/></svg>
<div class="t" style="left:177.5px;top:381.6px;font-size:8.7px;color:#fff;">Row Groups</div>
<div class="a" style="left:158px;top:399.5px;width:272px;height:107.2px;background:#fff;"></div>
<div class="a" style="left:159px;top:400.8px;width:270.3px;height:13.6px;background:#6b6b6b;border:1px solid #858585;box-sizing:border-box;"></div>
<div class="a" style="left:161px;top:405.2px;width:4px;height:4.4px;background:#7b7b7b;"></div>
<div class="t" style="left:168.5px;top:400.2px;font-size:8.3px;color:#fff;letter-spacing:-0.2px;">(Details)</div>
<div class="a" style="left:414.3px;top:401.8px;width:1px;height:11.6px;background:#858585;"></div>
<svg class="a" style="left:419.2px;top:406.3px;" width="5" height="3" viewBox="0 0 5 3"><path d="M0 0 H5 L2.5 2.8 Z" fill="#111"/></svg>
<svg class="a" style="left:434.2px;top:381.8px;" width="13" height="10" viewBox="0 0 13 10"><rect x="0" y="0" width="12" height="9.4" fill="#8a8f96"/><rect x="0.40" y="0.40" width="3.4" height="1.85" fill="#a9c9f2"/><rect x="0.40" y="2.65" width="3.4" height="1.85" fill="#a9c9f2"/><rect x="0.40" y="4.90" width="3.4" height="1.85" fill="#a9c9f2"/><rect x="0.40" y="7.15" width="3.4" height="1.85" fill="#a9c9f2"/><rect x="4.30" y="0.40" width="3.4" height="1.85" fill="#f8f8f8"/><rect x="4.30" y="2.65" width="3.4" height="1.85" fill="#f8f8f8"/><rect x="4.30" y="4.90" width="3.4" height="1.85" fill="#f8f8f8"/><rect x="4.30" y="7.15" width="3.4" height="1.85" fill="#f8f8f8"/><rect x="8.20" y="0.40" width="3.4" height="1.85" fill="#a9c9f2"/><rect x="8.20" y="2.65" width="3.4" height="1.85" fill="#a9c9f2"/><rect x="8.20" y="4.90" width="3.4" height="1.85" fill="#a9c9f2"/><rect x="8.20" y="7.15" width="3.4" height="1.85" fill="#a9c9f2"/></svg>
<div class="t" style="left:452.5px;top:381.6px;font-size:8.7px;color:#fff;letter-spacing:-0.1px;">Column Groups</div>
<svg class="a" style="left:694px;top:387.4px;" width="6" height="4" viewBox="0 0 6 4"><path d="M0 0.2 H6 L3 3.6 Z" fill="#9a9a9a"/></svg>
<div class="a" style="left:432.3px;top:399px;width:271.7px;height:107.7px;background:#fff;"></div>
<!-- ===== properties ===== -->
<div class="t" style="left:710.5px;top:120.5px;font-size:8.5px;color:#fff;">Properties</div>
<svg class="a" style="left:884.8px;top:124px;" width="7" height="6" viewBox="0 0 7 6"><path d="M0.7 0.4 L6.3 5.6 M6.3 0.4 L0.7 5.6" stroke="#fff" stroke-width="1.5" fill="none"/></svg>
<div class="a" style="left:706.2px;top:137px;width:190.3px;height:34px;background:#444;"></div>
<div class="t" style="left:711.3px;top:142.8px;font-size:9.6px;font-weight:bold;color:#fff;letter-spacing:-0.1px;">Body</div>
<div class="a" style="left:707.3px;top:160.2px;width:11.6px;height:10px;background:#23527f;border:1px solid #3e76ae;box-sizing:border-box;"></div>
<svg class="a" style="left:708.8px;top:161.4px;" width="9" height="8" viewBox="0 0 9 8"><rect x="0.6" y="0.6" width="2.2" height="2.2" fill="none" stroke="#fff" stroke-width="0.8"/><rect x="0.6" y="4.8" width="2.2" height="2.2" fill="none" stroke="#fff" stroke-width="0.8"/><path d="M4.5 1.2 V3 M6 1.2 V3 M7.5 1.2 V3 M4.5 5 H8" stroke="#9db4d2" stroke-width="0.7"/></svg>
<svg class="a" style="left:720.4px;top:161px;" width="9" height="9" viewBox="0 0 9 9"><path d="M2 0.4 L3.6 3.4 H0.4 Z" fill="#d05050"/><path d="M2 4.6 A1.5 1.7 0 1 0 2.01 4.6" fill="none" stroke="#5b8fd8" stroke-width="0.9"/><path d="M6.4 0.5 V7.5 M4.8 5.6 L6.4 8.3 L8 5.6" fill="none" stroke="#d8d8d8" stroke-width="0.9"/></svg>
<div class="a" style="left:731.6px;top:160.8px;width:1px;height:9px;background:#666;"></div>
<svg class="a" style="left:735px;top:161.2px;" width="9" height="8" viewBox="0 0 9 8"><rect x="0.5" y="0.5" width="7.4" height="7" fill="#e4ebf6" stroke="#5d8fd8" stroke-width="0.9"/><rect x="0.5" y="0.5" width="7.4" height="1.8" fill="#3f78cc"/><rect x="1.6" y="3.4" width="3" height="1.6" fill="#f0b070"/><path d="M1.6 6 H6.6" stroke="#7f8fb0" stroke-width="0.8"/></svg>
<div id="pgrid" class="a" style="left:706.2px;top:171px;width:190.3px;height:296px;background:#fff;overflow:hidden;">
<div class="a" style="left:0;top:0;width:11px;height:115.9px;background:#f3f3f3;"></div>
<div class="a" style="left:0;top:2.3px;width:188.8px;height:12.6px;background:#f3f3f3;"></div>
<svg class="a" style="left:3.8px;top:6.9px;" width="5" height="4" viewBox="0 0 5 4"><path d="M0.5 0.6 L2.5 2.8 L4.5 0.6" fill="none" stroke="#222" stroke-width="1.2"/></svg>
<div class="prop" style="left:14.2px;top:1.7px;font-weight:bold;font-size:8.5px;color:#111;">Border</div>
<div class="a" style="left:11px;top:26.7px;width:177.8px;height:1px;background:#ededed;"></div>
<svg class="a" style="left:4.3px;top:17.5px;" width="4" height="6" viewBox="0 0 4 6"><path d="M0.7 0.6 L3 3 L0.7 5.4" fill="none" stroke="#777" stroke-width="1"/></svg>
<div class="prop" style="left:14.2px;top:14.3px;font-size:8.5px;color:#333;width:67.2px;overflow:hidden;">BorderColor</div>
<div class="prop" style="left:83.8px;top:14.3px;font-size:8.5px;color:#333;">Black</div>
<div class="a" style="left:11px;top:39.4px;width:177.8px;height:1px;background:#ededed;"></div>
<svg class="a" style="left:4.3px;top:30.1px;" width="4" height="6" viewBox="0 0 4 6"><path d="M0.7 0.6 L3 3 L0.7 5.4" fill="none" stroke="#777" stroke-width="1"/></svg>
<div class="prop" style="left:14.2px;top:26.9px;font-size:8.5px;color:#333;width:67.2px;overflow:hidden;">BorderStyle</div>
<div class="prop" style="left:83.8px;top:26.9px;font-size:8.5px;color:#333;">None</div>
<div class="a" style="left:11px;top:52.0px;width:177.8px;height:1px;background:#ededed;"></div>
<svg class="a" style="left:4.3px;top:42.8px;" width="4" height="6" viewBox="0 0 4 6"><path d="M0.7 0.6 L3 3 L0.7 5.4" fill="none" stroke="#777" stroke-width="1"/></svg>
<div class="prop" style="left:14.2px;top:39.6px;font-size:8.5px;color:#333;width:67.2px;overflow:hidden;">BorderWidth</div>
<div class="prop" style="left:83.8px;top:39.6px;font-size:8.5px;color:#333;">1pt</div>
<div class="a" style="left:0;top:52.8px;width:188.8px;height:12.6px;background:#f3f3f3;"></div>
<svg class="a" style="left:3.8px;top:57.4px;" width="5" height="4" viewBox="0 0 5 4"><path d="M0.5 0.6 L2.5 2.8 L4.5 0.6" fill="none" stroke="#222" stroke-width="1.2"/></svg>
<div class="prop" style="left:14.2px;top:52.2px;font-weight:bold;font-size:8.5px;color:#111;">Fill</div>
<div class="a" style="left:11px;top:77.2px;width:177.8px;height:1px;background:#ededed;"></div>
<div class="prop" style="left:14.2px;top:64.8px;font-size:8.5px;color:#333;width:67.2px;overflow:hidden;">BackgroundColor</div>
<div class="a" style="left:83px;top:66.7px;width:10.4px;height:10.4px;border:1px solid #555;background:#fff;box-sizing:border-box;"></div>
<div class="prop" style="left:97.8px;top:64.8px;font-size:8.5px;color:#333;">No Color</div>
<div class="a" style="left:11px;top:89.8px;width:177.8px;height:1px;background:#ededed;"></div>
<svg class="a" style="left:4.3px;top:80.6px;" width="4" height="6" viewBox="0 0 4 6"><path d="M0.7 0.6 L3 3 L0.7 5.4" fill="none" stroke="#777" stroke-width="1"/></svg>
<div class="prop" style="left:14.2px;top:77.4px;font-size:8.5px;color:#333;width:67.2px;overflow:hidden;">BackgroundImage</div>
<div class="a" style="left:0;top:90.6px;width:188.8px;height:12.6px;background:#f3f3f3;"></div>
<svg class="a" style="left:3.8px;top:95.2px;" width="5" height="4" viewBox="0 0 5 4"><path d="M0.5 0.6 L2.5 2.8 L4.5 0.6" fill="none" stroke="#222" stroke-width="1.2"/></svg>
<div class="prop" style="left:14.2px;top:90.0px;font-weight:bold;font-size:8.5px;color:#111;">Position</div>
<div class="a" style="left:11px;top:115.1px;width:177.8px;height:1px;background:#ededed;"></div>
<svg class="a" style="left:4.3px;top:105.9px;" width="4" height="6" viewBox="0 0 4 6"><path d="M0.7 0.6 L3 3 L0.7 5.4" fill="none" stroke="#777" stroke-width="1"/></svg>
<div class="prop" style="left:14.2px;top:102.7px;font-size:8.5px;color:#333;width:67.2px;overflow:hidden;">Size</div>
<div class="prop" style="left:83.8px;top:102.7px;font-size:8.9px;font-weight:bold;color:#111;">8in, 2.25in</div>
<div class="a" style="left:81.3px;top:14.9px;width:1px;height:12.6px;background:#ececec;"></div>
<div class="a" style="left:81.3px;top:27.5px;width:1px;height:12.6px;background:#ececec;"></div>
<div class="a" style="left:81.3px;top:40.2px;width:1px;height:12.6px;background:#ececec;"></div>
<div class="a" style="left:81.3px;top:65.4px;width:1px;height:12.6px;background:#ececec;"></div>
<div class="a" style="left:81.3px;top:78.0px;width:1px;height:12.6px;background:#ececec;"></div>
<div class="a" style="left:81.3px;top:103.3px;width:1px;height:12.6px;background:#ececec;"></div>
</div>
<div class="a" style="left:706.2px;top:468.3px;width:190.3px;height:38.4px;background:#444;border:1px solid #5c5c5c;box-sizing:border-box;"></div>
<div class="t" style="left:710px;top:469.4px;font-size:8.4px;font-weight:bold;color:#fff;">BackgroundColor</div>
<div class="t" style="left:710px;top:481.4px;font-size:8.77px;color:#f0f0f0;">Specifies the background color of the item.</div>

<!-- ===== status bar ===== -->
<div id="status" class="a" style="left:2px;top:510px;width:896px;height:18.3px;background:#2d2d2d;"></div>
<div class="a" style="left:722.1px;top:511.7px;width:14.1px;height:16.1px;background:#fdfdfd;"></div>
<svg class="a" style="left:724.5px;top:514.5px;" width="9" height="9" viewBox="0 0 9 9"><rect x="0.4" y="0.4" width="8.2" height="8.2" fill="#eef3fb" stroke="#9ab3d8" stroke-width="0.7"/><rect x="1.4" y="1.4" width="3" height="3" fill="#4f86d6"/><rect x="1.4" y="5.2" width="6.2" height="2.6" fill="#f0a560"/><path d="M5.2 1.6 H7.6 M5.2 3 H7.6" stroke="#b0b8c8" stroke-width="0.7"/></svg>
<svg class="a" style="left:739.5px;top:515.5px;" width="8" height="9" viewBox="0 0 8 9"><rect x="1.6" y="0.4" width="4.8" height="3" fill="#f2f2f2"/><rect x="0.3" y="2.6" width="7.4" height="4" rx="0.6" fill="#b9b9b9"/><rect x="1.6" y="5.2" width="4.8" height="3.2" fill="#f2f2f2"/><circle cx="6.3" cy="6.8" r="1.3" fill="#5aa86a"/></svg>
<div class="t" style="left:757.3px;top:513.4px;font-size:9.8px;color:#fff;transform:scaleX(0.9);transform-origin:0 0;">100%</div>
<div class="a" style="left:789px;top:517.6px;width:8.8px;height:3px;background:#fff;"></div>
<div class="a" style="left:802.2px;top:518.8px;width:78px;height:1px;background:#e6e6e6;"></div>
<div class="a" style="left:840.6px;top:516.6px;width:1.2px;height:5.2px;background:#e6e6e6;"></div>
<div class="a" style="left:883.4px;top:517.8px;width:9.8px;height:3px;background:#fff;"></div>
<div class="a" style="left:886.8px;top:514.4px;width:3px;height:9.8px;background:#fff;"></div>
</body>
</html>
